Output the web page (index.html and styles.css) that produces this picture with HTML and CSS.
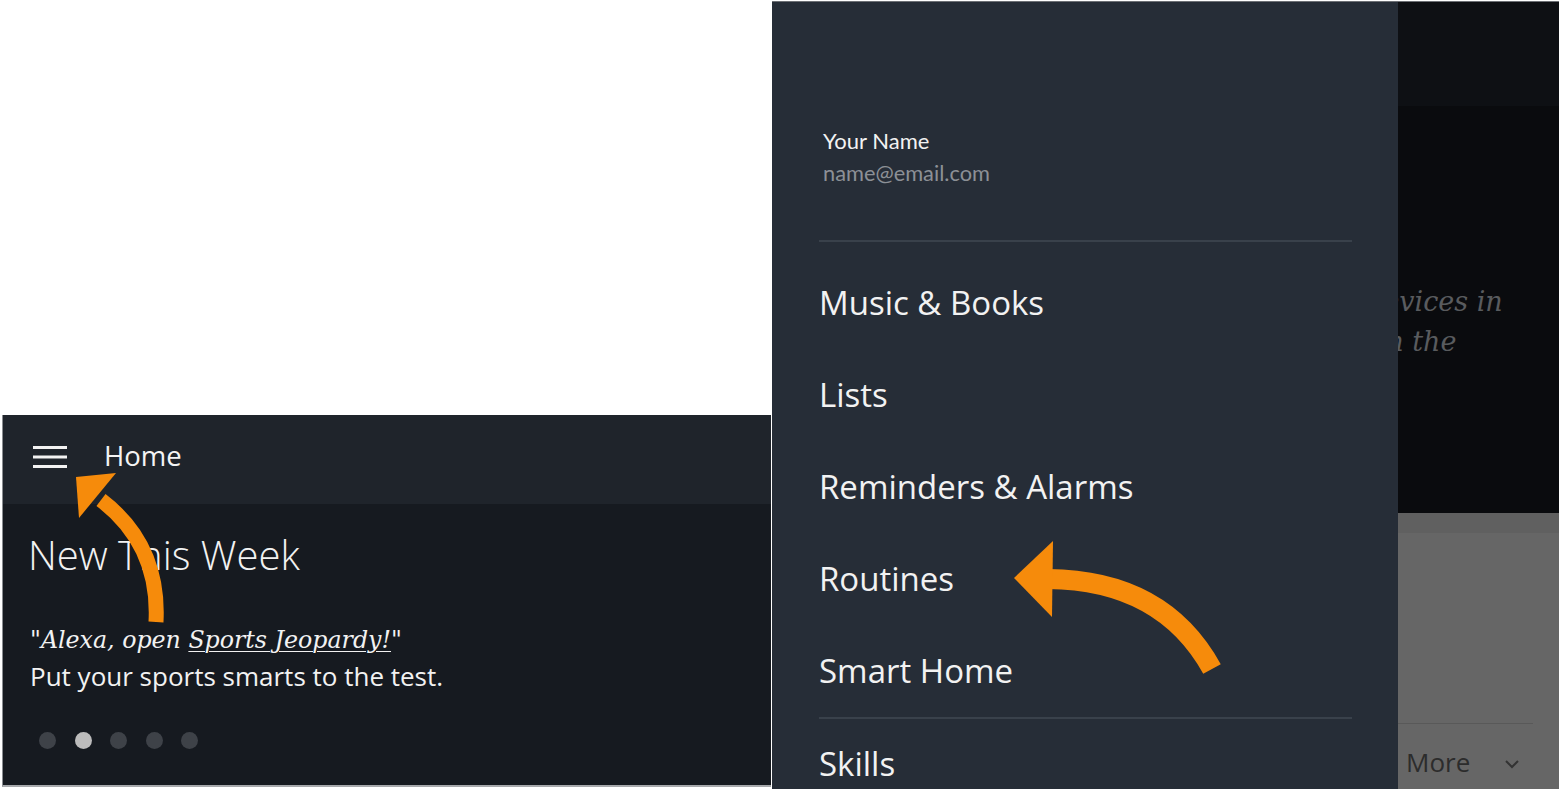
FILE: index.html
```html
<!DOCTYPE html>
<html>
<head>
<meta charset="utf-8">
<link rel="stylesheet" href="styles.css">
</head>
<body>
<div class="page">
  <div class="left-col">
    <div class="spacer"></div>
    <section class="phone">
      <header class="bar">
        <svg class="burger" width="34" height="24" viewBox="0 0 34 24"><rect x="0" y="1" width="34" height="3" fill="#f2f2f2"/><rect x="0" y="10.5" width="34" height="3" fill="#f2f2f2"/><rect x="0" y="20" width="34" height="3" fill="#f2f2f2"/></svg>
        <span class="bar-title">Home</span>
      </header>
      <div class="feed">
        <h2 class="feed-title">New This Week</h2>
        <p class="quote">"Alexa, open <u>Sports Jeopardy!</u>"</p>
        <p class="desc">Put your sports smarts to the test.</p>
        <div class="dots"><span class="dot"></span><span class="dot on"></span><span class="dot"></span><span class="dot"></span><span class="dot"></span></div>
      </div>
    </section>
  </div>
  <section class="right">
    <nav class="drawer">
      <div class="profile">
        <div class="pname">Your Name</div>
        <div class="pmail">name@email.com</div>
      </div>
      <ul class="menu">
        <li>Music &amp; Books</li>
        <li>Lists</li>
        <li>Reminders &amp; Alarms</li>
        <li>Routines</li>
        <li>Smart Home</li>
        <li class="sep">Skills</li>
      </ul>
    </nav>
    <div class="behind">
      <div class="b-top"></div>
      <div class="b-dark">
        <p class="b-text"><span class="l1">devices in</span><span class="l2">on the</span></p>
      </div>
      <div class="b-gray">
        <div class="b-band"></div>
        <div class="b-fill"></div>
        <div class="b-more"><span>More</span><svg width="16" height="10" viewBox="0 0 16 10"><path d="M2 2 L8 8 L14 2" fill="none" stroke="#333" stroke-width="2"/></svg></div>
      </div>
    </div>
  </section>
  <svg class="arrows" width="1559" height="789" viewBox="0 0 1559 789">
    <path d="M156 622 Q160 545 101 500" fill="none" stroke="#f68b0b" stroke-width="15"/>
    <polygon points="76,477 116,473 79,518" fill="#f68b0b"/>
    <path d="M1048 579 Q1163 580 1212 669" fill="none" stroke="#f68b0b" stroke-width="20"/>
    <polygon points="1014,578 1053,541 1052,617" fill="#f68b0b"/>
  </svg>
</div>
</body>
</html>
```

FILE: styles.css
```css
* { box-sizing: border-box; }
html, body { margin: 0; padding: 0; background: #fff; }
.page {
  position: relative;
  width: 1559px;
  height: 789px;
  display: flex;
  overflow: hidden;
}
.left-col {
  width: 771px;
  display: flex;
  flex-direction: column;
  flex: none;
}
.spacer { height: 415px; flex: none; }
.phone {
  margin-left: 2px;
  height: 372px;
  border-left: 1px solid #8a8d91;
  border-bottom: 2px solid #a7a9ac;
  display: flex;
  flex-direction: column;
  background: #161a20;
}
.bar {
  height: 89px;
  flex: none;
  background: #1f242b;
  display: flex;
  align-items: center;
  padding-left: 30px;
}
.burger { display: block; margin-top: -5px; }
.bar-title {
  margin-left: 37px;
  font-family: "Open Sans", sans-serif;
  font-size: 27.5px;
  color: #f4f4f4;
  margin-top: -8px;
}
.feed {
  flex: 1;
  padding: 27px 0 0 25px;
}
.feed-title {
  margin: 0;
  font-family: "Open Sans", sans-serif;
  font-weight: 300;
  font-size: 40px;
  line-height: 48px;
  color: #f2f2f2;
}
.quote {
  margin: 43px 0 0 2px;
  font-family: "DejaVu Serif", serif;
  font-style: italic;
  font-size: 23.7px;
  line-height: 36px;
  color: #f2f2f2;
}
.quote u { text-underline-offset: 3px; text-decoration-thickness: 1px; }
.desc {
  margin: 0 0 0 2px;
  font-family: "Open Sans", sans-serif;
  font-size: 26px;
  line-height: 36px;
  color: #f2f2f2;
}
.dots {
  display: flex;
  gap: 18.5px;
  margin-top: 38px;
  padding-left: 11px;
}
.dot {
  width: 17px;
  height: 17px;
  border-radius: 50%;
  background: #3e4248;
}
.dot.on { background: #bcbcbc; }

.right {
  margin-left: 1px;
  flex: 1;
  display: flex;
  border-top: 1px solid #6d7075;
  margin-top: 1px;
}
.drawer {
  width: 626px;
  flex: none;
  background: #262d37;
  padding: 123px 0 0 47px;
}
.profile { padding-left: 4px; }
.pname {
  font-family: Lato, sans-serif;
  font-size: 22px;
  line-height: 32px;
  color: #f2f2f2;
}
.pmail {
  font-family: Lato, sans-serif;
  font-size: 21.8px;
  line-height: 32px;
  color: #8c9096;
}
.menu {
  list-style: none;
  margin: 51px 0 0;
  padding: 15px 0 0;
  width: 533px;
  border-top: 2px solid #39414b;
}
.menu li {
  font-family: "Open Sans", sans-serif;
  font-size: 33px;
  line-height: 92px;
  color: #f2f2f2;
}
.menu li.sep { border-top: 2px solid #39414b; line-height: 90px; }

.behind {
  flex: 1;
  display: flex;
  flex-direction: column;
}
.b-top { height: 104px; background: #0e1014; flex: none; }
.b-dark {
  height: 407px;
  background: #0a0b0e;
  flex: none;
  overflow: hidden;
  padding-top: 176px;
}
.b-text {
  margin: 0;
  font-family: "DejaVu Serif", serif;
  font-style: italic;
  font-size: 27px;
  line-height: 40px;
  color: #595b5e;
  white-space: nowrap;
}
.b-text span { display: block; }
.b-text .l1 { margin-left: -32px; }
.b-text .l2 { margin-left: -28px; }
.b-gray {
  flex: 1;
  background: #666;
  display: flex;
  flex-direction: column;
}
.b-band { height: 20px; background: #606060; flex: none; }
.b-fill { height: 191px; flex: none; border-bottom: 1px solid #595959; margin-right: 26px; }
.b-more {
  display: flex;
  align-items: center;
  padding: 20px 0 0 8px;
  font-family: "Open Sans", sans-serif;
  font-size: 26px;
  color: #2c2c2c;
}
.b-more svg { margin-left: 34px; margin-top: 4px; }
.arrows {
  position: absolute;
  left: 0;
  top: 0;
  pointer-events: none;
}
```
